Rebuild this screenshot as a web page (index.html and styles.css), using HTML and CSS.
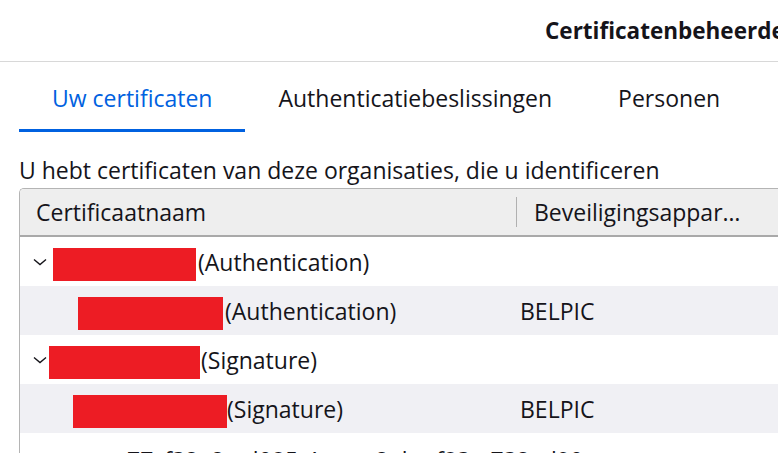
FILE: index.html
```html
<!DOCTYPE html>
<html lang="nl">
<head>
<meta charset="utf-8">
<title>Certificatenbeheerder</title>
<link rel="stylesheet" href="styles.css">
</head>
<body>
<div class="dialog">
  <header class="titlebar"><h1 class="title">Certificatenbeheerder</h1></header>
  <nav class="tabs">
    <div class="tab tab-active">Uw certificaten</div>
    <div class="tab">Authenticatiebeslissingen</div>
    <div class="tab">Personen</div>
  </nav>
  <p class="intro">U hebt certificaten van deze organisaties, die u identificeren</p>
  <div class="table">
    <div class="thead">
      <div class="th th-name">Certificaatnaam</div>
      <div class="th th-device"><span class="sep"></span>Beveiligingsappar…</div>
    </div>
    <div class="row">
      <div class="cell cell-name level0">
        <svg class="chev" width="14" height="8" viewBox="0 0 14 8"><path d="M1 1.5 L7 6.5 L13 1.5" fill="none" stroke="#15141a" stroke-width="1.4"/></svg>
        <span class="redact redact-a1"></span><span>(Authentication)</span>
      </div>
      <div class="cell cell-device"></div>
    </div>
    <div class="row row-alt">
      <div class="cell cell-name level1">
        <span class="redact redact-a2"></span><span>(Authentication)</span>
      </div>
      <div class="cell cell-device">BELPIC</div>
    </div>
    <div class="row">
      <div class="cell cell-name level0">
        <svg class="chev" width="14" height="8" viewBox="0 0 14 8"><path d="M1 1.5 L7 6.5 L13 1.5" fill="none" stroke="#15141a" stroke-width="1.4"/></svg>
        <span class="redact redact-s1"></span><span>(Signature)</span>
      </div>
      <div class="cell cell-device"></div>
    </div>
    <div class="row row-alt">
      <div class="cell cell-name level1">
        <span class="redact redact-s2"></span><span>(Signature)</span>
      </div>
      <div class="cell cell-device">BELPIC</div>
    </div>
    <div class="row">
      <div class="cell cell-name level0 plain">
        <span>ce-test-77cf32e2-ad085-4ace-a2eb-ef83e-732ed90</span>
      </div>
      <div class="cell cell-device"></div>
    </div>
  </div>
</div>
</body>
</html>
```
FILE: styles.css
```css
html, body {
  margin: 0;
  padding: 0;
  background: #ffffff;
  overflow: hidden;
}
body {
  width: 778px;
  height: 453px;
  font-family: "Open Sans", "Noto Sans", sans-serif;
  color: #15141a;
}
*, *::before, *::after {
  box-sizing: border-box;
}
.dialog {
  width: 1340px;
}
.titlebar {
  height: 62px;
  border-bottom: 1px solid #d8d8d8;
  display: flex;
  align-items: center;
  padding-left: 545px;
}
.title {
  margin: 0;
  font-size: 22.5px;
  font-weight: 700;
  white-space: nowrap;
}
.tabs {
  display: flex;
  padding-left: 19px;
  margin-top: 3px;
}
.tab {
  padding: 1px 33px 0;
  height: 67px;
  display: flex;
  align-items: center;
  font-size: 23px;
  white-space: nowrap;
  border-bottom: 3px solid transparent;
}
.tab-active {
  color: #0061e0;
  border-bottom-color: #0061e0;
}
.intro {
  margin: 22px 0 2px 19px;
  font-size: 23px;
  line-height: 32px;
  height: 32px;
  white-space: nowrap;
}
.table {
  margin: 0 0 0 19px;
  border-left: 1px solid #b4b4b4;
  border-top: 1px solid #b4b4b4;
  border-top-left-radius: 5px;
}
.thead {
  display: flex;
  height: 48px;
  background: #eeeeee;
  border-bottom: 2px solid #a9a9a9;
  font-size: 23px;
  border-top-left-radius: 4px;
}
.th {
  display: flex;
  align-items: center;
  white-space: nowrap;
}
.th-name {
  width: 496px;
  padding-left: 16px;
}
.sep {
  width: 1px;
  height: 30px;
  background: #b0b0b0;
  margin-right: 17px;
}
.row {
  display: flex;
  height: 49px;
  font-size: 23px;
  white-space: nowrap;
}
.row-alt {
  background: #f0f0f4;
}
.cell {
  display: flex;
  align-items: center;
}
.cell-name {
  width: 496px;
  flex: none;
}
.level0 {
  padding-left: 13px;
}
.level1 {
  padding-left: 53px;
}
.plain {
  padding-left: 28px;
  padding-top: 4px;
}
.chev {
  margin-right: 6px;
}
.redact {
  display: inline-block;
  height: 33px;
  margin-top: 6px;
  background: #ed1c24;
  margin-right: 2px;
  flex: none;
}
.redact-a1 { width: 143px; }
.redact-a2 { width: 145px; margin-left: 5px; }
.redact-s1 { width: 151px; margin-left: -4px; margin-right: 1px; }
.redact-s2 { width: 154px; margin-right: 0; }
.cell-device {
  padding-left: 4px;
}
```
